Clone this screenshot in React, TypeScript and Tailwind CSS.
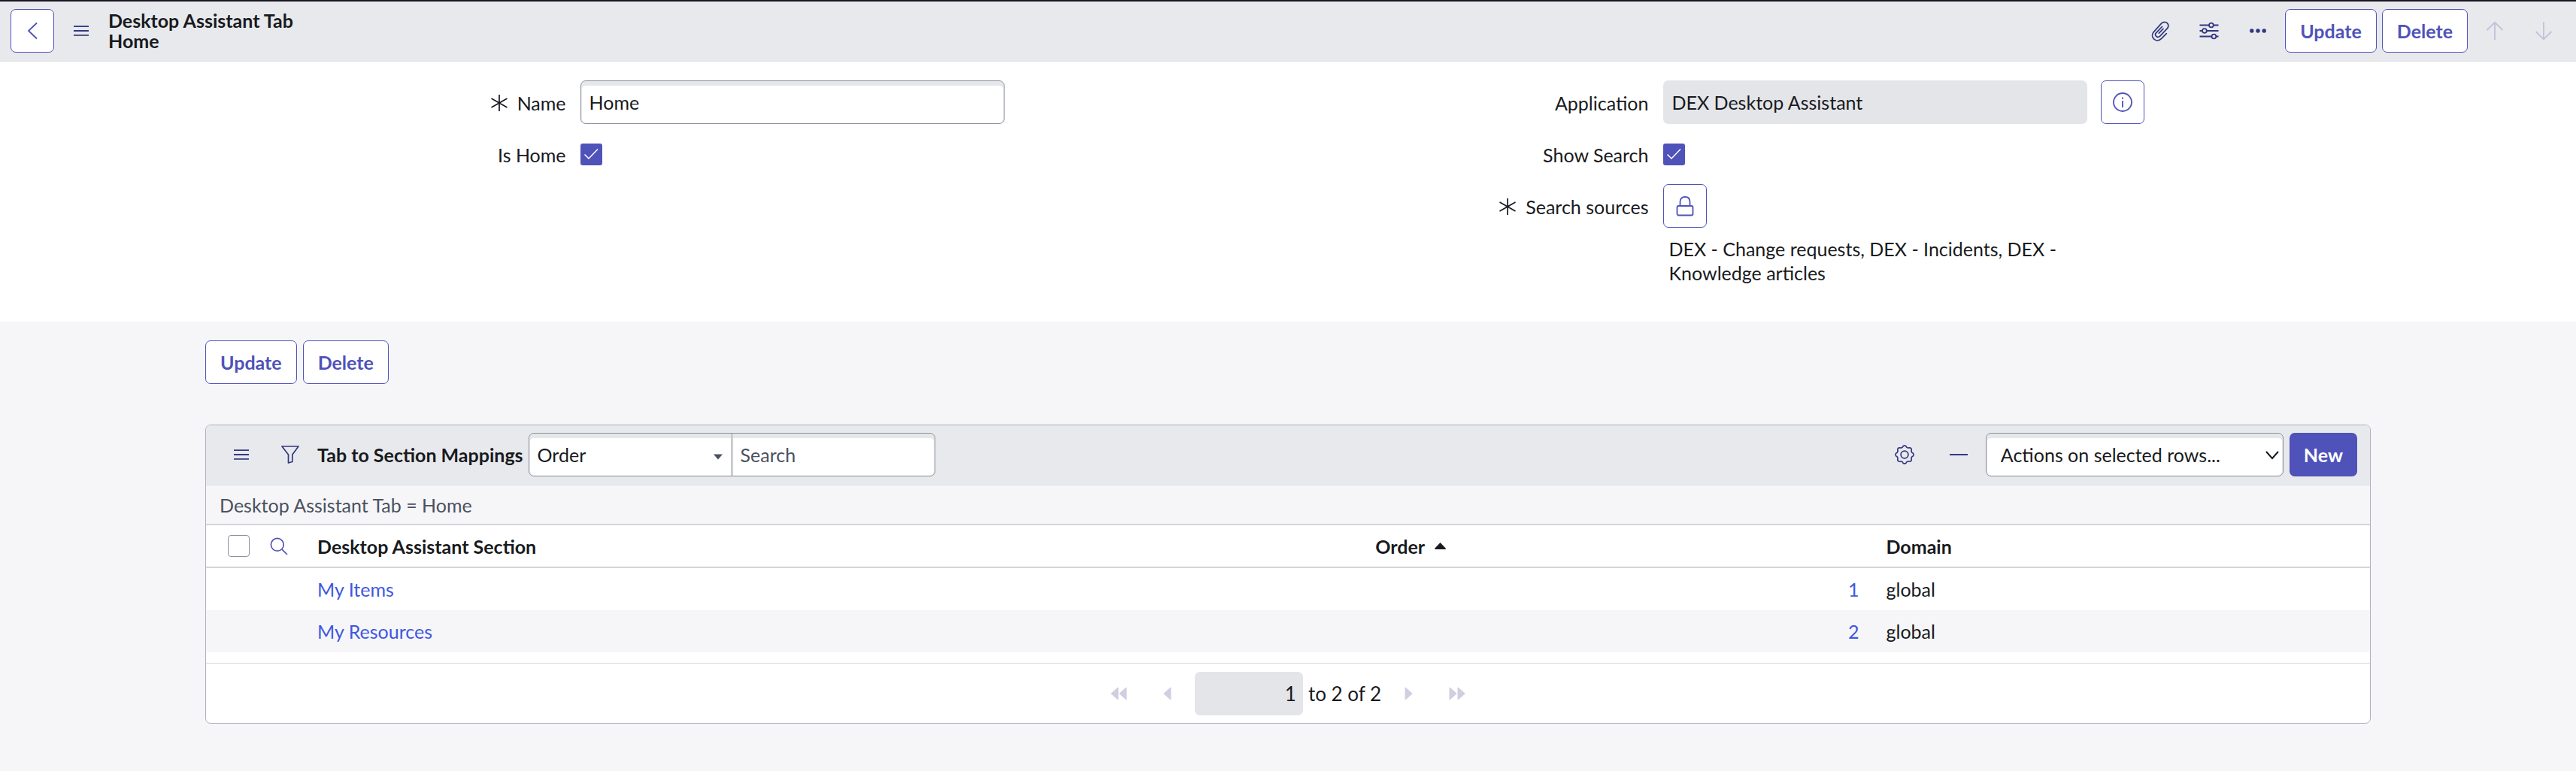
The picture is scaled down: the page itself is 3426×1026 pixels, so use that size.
import React from "react";

const ICON_BTN =
  "flex size-[58px] shrink-0 items-center justify-center rounded-[7px]";
const OUTLINE =
  "border border-[#4f52b9] bg-white text-[#4f52b9] rounded-[7px]";
const FIELD =
  "h-[58px] border border-[#8b90a0] bg-white text-[25px] text-[#181a20] shadow-[inset_0_6px_1px_#e6e7e8,inset_1px_0_1px_#e6e7e8,inset_-1px_0_1px_#e6e7e8] outline-none";

function TextButton({ children }: { children: string }) {
  return (
    <button type="button" className={`${OUTLINE} h-[58px] px-[19px] text-[25px] font-bold`}>
      {children}
    </button>
  );
}

function MenuIcon() {
  return (
    <svg width="20" height="14" viewBox="0 0 20 14" fill="none" stroke="currentColor" strokeWidth="1.8">
      <path d="M0 1.2h20M0 7h20M0 12.8h20" />
    </svg>
  );
}

function PaperclipIcon() {
  return (
    <svg width="24" height="27" viewBox="0 0 24 27" fill="none" stroke="currentColor" strokeWidth="1.7" strokeLinecap="round" strokeLinejoin="round">
      <path d="M20.3 16.7L13.6 23.4C10.4 26.4 6.4 26.6 3.6 23.9C.8 21.200.8 17.300 3.500 14.400L13.200 3.600C15.600.9 18.900.5 21.200 2.700C23.400 4.900 23.100 8 20.900 10.400L11.900 19.900C10.400 21.400 8.200 21.700 6.700 20.400C5.200 19 5.300 17.100 6.700 15.600L14.500 7.500" />
      <path d="M10.300 16.200L16 10.300" />
    </svg>
  );
}

function SlidersIcon() {
  return (
    <svg width="26" height="24" viewBox="0 0 26 24" fill="none" stroke="currentColor" strokeWidth="1.8">
      <path d="M0.500 4.500h12.500M18.800 4.500h6.700M0.500 12h3.500M9.800 12h15.700M0.500 19.500h16M22.300 19.500h3.200" />
      <circle cx="15.900" cy="4.500" r="2.900" />
      <circle cx="6.900" cy="12" r="2.900" />
      <circle cx="19.400" cy="19.500" r="2.900" />
    </svg>
  );
}

function DotsIcon() {
  return (
    <svg width="24" height="6" viewBox="0 0 24 6" fill="currentColor">
      <circle cx="3.8" cy="3" r="2.7" />
      <circle cx="12" cy="3" r="2.7" />
      <circle cx="20.2" cy="3" r="2.7" />
    </svg>
  );
}

function ArrowIcon({ down = false }: { down?: boolean }) {
  return (
    <svg width="24" height="26" viewBox="0 0 24 26" fill="none" stroke="currentColor" strokeWidth="1.8">
      {down ? <path d="M12 1v23M1.5 14L12 24.2L22.5 14" /> : <path d="M12 25V2M1.5 12L12 1.8L22.5 12" />}
    </svg>
  );
}

function AsteriskIcon() {
  return (
    <svg width="24" height="24" viewBox="0 0 24 24" fill="none" stroke="#181a20" strokeWidth="1.7" className="mr-[12px]">
      <path d="M12 1v22M1.5 6l21 12M22.5 6l-21 12" />
    </svg>
  );
}

function InfoIcon() {
  return (
    <svg width="26" height="26" viewBox="0 0 26 26" fill="none" stroke="currentColor" strokeWidth="1.8">
      <circle cx="13" cy="13" r="12" />
      <path d="M13 11v9M13 6.6v2.2" />
    </svg>
  );
}

function LockIcon() {
  return (
    <svg width="24" height="28" viewBox="0 0 24 28" fill="none" stroke="currentColor" strokeWidth="1.8">
      <rect x="1.5" y="14" width="21" height="12.5" rx="2" />
      <path d="M5.500 14V8.500C5.500 4.500 8 2 12 2s6.500 2.500 6.500 6.500V14" />
    </svg>
  );
}

function FunnelIcon() {
  return (
    <svg width="24" height="24" viewBox="0 0 24 24" fill="none" stroke="currentColor" strokeWidth="1.7" strokeLinejoin="round">
      <path d="M1 1h22L14.800 12v9.500L9.500 23V12z" />
    </svg>
  );
}

// Outline of a gear with eight soft teeth, the first one pointing up.
const gearPath =
  Array.from({ length: 128 }, (_, i) => {
    const a = (i / 128) * Math.PI * 2;
    const r = 11 + Math.tanh(1.6 * Math.cos(8 * a));
    const x = 14 + r * Math.sin(a);
    const y = 14 - r * Math.cos(a);
    return `${i === 0 ? "M" : "L"}${x.toFixed(2)} ${y.toFixed(2)}`;
  }).join("") + "z";

function GearIcon() {
  return (
    <svg width="28" height="28" viewBox="0 0 28 28" fill="none" stroke="currentColor" strokeWidth="1.700" strokeLinejoin="round">
      <path d={gearPath} />
      <circle cx="14" cy="14" r="4.900" />
    </svg>
  );
}

function SearchIcon() {
  return (
    <svg width="24" height="24" viewBox="0 0 24 24" fill="none" stroke="currentColor" strokeWidth="1.700">
      <circle cx="9.800" cy="9.800" r="8.400" />
      <path d="M15.800 15.800L23 23" />
    </svg>
  );
}

function PagerIcon({ double = false, right = false }: { double?: boolean; right?: boolean }) {
  return (
    <svg
      width={double ? 22 : 12}
      height="18"
      viewBox={double ? "0 0 22 18" : "0 0 12 18"}
      fill="currentColor"
      className={right ? "rotate-180" : ""}
    >
      <path d="M10.500 1.200V16.800Q10.200 17.800 9.200 17L1 9.800Q.3 9 1 8.200L9.200 1Q10.200.2 10.500 1.200z" />
      {double && <path d="M21.500 1.200V16.800Q21.200 17.800 20.200 17L12 9.800Q11.300 9 12 8.200L20.200 1Q21.200.2 21.500 1.200z" />}
    </svg>
  );
}

function CheckedBox({ id }: { id: string }) {
  return (
    <span className="relative flex size-[29px]">
      <input id={id} type="checkbox" defaultChecked className="size-full appearance-none rounded-[3px] bg-[#4f52b9]" />
      <svg viewBox="0 0 29 29" fill="none" stroke="#fff" strokeWidth="1.500" className="pointer-events-none absolute inset-0">
        <path d="M5.500 14.500L11 20L23 7.500" />
      </svg>
    </span>
  );
}

function Row({ id, label, required, children }: { id: string; label: string; required?: boolean; children: React.ReactNode }) {
  return (
    <div className="flex">
      <label htmlFor={id} className="flex h-[58px] w-[33.300%] shrink-0 items-center justify-end pt-[2px]">
        {required && <AsteriskIcon />}
        {label}
      </label>
      <div className="ml-[19px] flex min-h-[58px] min-w-0 flex-1 items-center">{children}</div>
    </div>
  );
}

const rows = [
  { section: "My Items", order: 1, domain: "global" },
  { section: "My Resources", order: 2, domain: "global" },
];

export default function App() {
  return (
    <div className="min-h-screen bg-[#f6f6f8] font-['Lato',sans-serif] text-[25px] leading-[32px] text-[#181a20]">
      <header className="flex items-center border-t-2 border-b border-t-[#181523] border-b-[#dddfe4] bg-[#e8e9ed] px-[14px] pt-[10px] pb-[11px]">
        <button type="button" aria-label="Back" className={`${ICON_BTN} ${OUTLINE}`}>
          <svg width="14" height="24" viewBox="0 0 14 24" fill="none" stroke="currentColor" strokeWidth="1.800">
            <path d="M13 1.500L2 12l11 10.500" />
          </svg>
        </button>
        <button type="button" aria-label="Form menu" className={`${ICON_BTN} ml-[7px] text-[#33377f]`}>
          <MenuIcon />
        </button>
        <h1 className="ml-[7px] text-[25px] leading-[27px] font-bold">
          Desktop Assistant Tab
          <br />
          Home
        </h1>
        <div className="ml-auto flex gap-[7px] text-[#33377f]">
          <button type="button" aria-label="Attachments" className={ICON_BTN}><PaperclipIcon /></button>
          <button type="button" aria-label="Personalize form" className={ICON_BTN}><SlidersIcon /></button>
          <button type="button" aria-label="More options" className={ICON_BTN}><DotsIcon /></button>
          <TextButton>Update</TextButton>
          <TextButton>Delete</TextButton>
          <button type="button" aria-label="Previous record" className={`${ICON_BTN} text-[#c1c1d8]`}><ArrowIcon /></button>
          <button type="button" aria-label="Next record" className={`${ICON_BTN} text-[#c1c1d8]`}><ArrowIcon down /></button>
        </div>
      </header>

      <form className="grid grid-cols-2 bg-white px-[7.970%] pt-[25px] pb-[49px]">
        <div className="flex flex-col gap-[11px]">
          <Row id="name" label="Name" required>
            <input id="name" defaultValue="Home" className={`${FIELD} w-[60%] rounded-[7px] px-[11px]`} />
          </Row>
          <Row id="is-home" label="Is Home">
            <CheckedBox id="is-home" />
          </Row>
        </div>
        <div className="flex flex-col gap-[11px]">
          <Row id="application" label="Application">
            <input id="application" readOnly defaultValue="DEX Desktop Assistant" className="h-[58px] w-[60%] rounded-[7px] bg-[#e4e5e9] px-[12px] outline-none" />
            <button type="button" aria-label="Application details" className={`${ICON_BTN} ${OUTLINE} ml-[18px]`}><InfoIcon /></button>
          </Row>
          <Row id="show-search" label="Show Search">
            <CheckedBox id="show-search" />
          </Row>
          <Row id="sources" label="Search sources" required>
            <div className="w-[60%]">
              <button id="sources" type="button" className={`${ICON_BTN} ${OUTLINE}`}><LockIcon /></button>
              <p className="mt-[12px] px-[8px]">DEX - Change requests, DEX - Incidents, DEX - Knowledge articles</p>
            </div>
          </Row>
        </div>
      </form>

      <main className="px-[7.970%] pt-[25px] pb-[62px]">
        <div className="flex gap-[8px]">
          <TextButton>Update</TextButton>
          <TextButton>Delete</TextButton>
        </div>

        <section className="mt-[54px] overflow-hidden rounded-[7px] border border-[#adb1bc] bg-white">
          <div className="flex items-center border-b border-[#dddfe4] bg-[#e8e9ed] pt-[10px] pr-[17px] pb-[11px] pl-[18px]">
            <button type="button" aria-label="List menu" className={`${ICON_BTN} text-[#33377f]`}><MenuIcon /></button>
            <button type="button" aria-label="Filter" className={`${ICON_BTN} ml-[7px] text-[#33377f]`}><FunnelIcon /></button>
            <h2 className="ml-[7px] text-[25px] font-bold">Tab to Section Mappings</h2>
            <div className="ml-[7px] flex">
              <div className="relative">
                <select aria-label="Search field" className={`${FIELD} w-[271px] appearance-none rounded-l-[7px] pr-[36px] pl-[11px]`}>
                  <option>Order</option>
                </select>
                <svg width="12" height="8" viewBox="0 0 12 8" fill="#4a5160" className="pointer-events-none absolute top-[28px] right-[13px]">
                  <path d="M0 .5h12L6 7.500z" />
                </svg>
              </div>
              <input aria-label="Search" placeholder="Search" className={`${FIELD} -ml-px w-[271px] rounded-r-[7px] px-[11px] placeholder:text-[#4a5160]`} />
            </div>
            <button type="button" aria-label="List settings" className={`${ICON_BTN} ml-auto text-[#33377f]`}><GearIcon /></button>
            <button type="button" aria-label="Collapse" className={`${ICON_BTN} ml-[14px] text-[#33377f]`}>
              <svg width="24" height="2" viewBox="0 0 24 2" fill="currentColor"><path d="M0 0h24v2H0z" /></svg>
            </button>
            <div className="relative ml-[7px]">
              <select aria-label="Actions on selected rows" className={`${FIELD} w-[396px] appearance-none rounded-[7px] pr-[36px] pl-[19px]`}>
                <option>Actions on selected rows...</option>
              </select>
              <svg width="18" height="12" viewBox="0 0 18 12" fill="none" stroke="#181a20" strokeWidth="2" className="pointer-events-none absolute top-[24px] right-[6px]">
                <path d="M1 1l8 9l8-9" />
              </svg>
            </div>
            <button type="button" className="ml-[8px] h-[58px] rounded-[7px] bg-[#4f52b9] px-[19px] text-[25px] font-bold text-white">New</button>
          </div>

          <div className="flex h-[53px] items-center border-b-2 border-[#d3d5db] bg-[#f6f6f8] px-[18px] text-[#4a5160]">
            <a href="#filter">Desktop Assistant Tab = Home</a>
          </div>

          <table className="mb-[14px] w-full table-fixed border-separate border-spacing-0 text-left">
            <colgroup>
              <col className="w-[72px]" />
              <col className="w-[58px]" />
              <col className="w-[48.900%]" />
              <col className="w-[23.600%]" />
              <col />
            </colgroup>
            <thead>
              <tr className="h-[57px] *:border-b-2 *:border-[#d3d5db]">
                <th className="pl-[29px]">
                  <input type="checkbox" aria-label="Select all rows" className="block size-[29px] appearance-none rounded-[4px] border border-[#8b90a0] bg-white" />
                </th>
                <th>
                  <button type="button" aria-label="Show column search" className="flex w-full items-center pl-[13px] text-[#4f52b9]"><SearchIcon /></button>
                </th>
                <th className="px-[18px]">Desktop Assistant Section</th>
                <th className="px-[18px]">
                  <span className="flex items-center gap-[13px]">
                    Order
                    <svg width="15" height="9" viewBox="0 0 15 9" fill="currentColor"><path d="M7.500 0L15 8q0 1-1 1H1Q0 9 0 8z" /></svg>
                  </span>
                </th>
                <th className="px-[18px]">Domain</th>
              </tr>
            </thead>
            <tbody>
              {rows.map((r) => (
                <tr key={r.section} className="h-[56px] even:bg-[#f6f6f8]">
                  <td />
                  <td />
                  <td className="px-[18px]"><a href="#record" className="text-[#3f57e0]">{r.section}</a></td>
                  <td className="px-[18px] text-right"><a href="#record" className="text-[#3f57e0]">{r.order}</a></td>
                  <td className="px-[18px]">{r.domain}</td>
                </tr>
              ))}
            </tbody>
          </table>

          <nav aria-label="Pagination" className="flex items-center justify-center gap-[7px] border-t border-[#d3d5db] pt-[11px] pb-[10px] text-[26px] text-[#cfcfe1]">
            <button type="button" aria-label="First page" className={ICON_BTN}><PagerIcon double /></button>
            <button type="button" aria-label="Previous page" className={ICON_BTN}><PagerIcon /></button>
            <input aria-label="Skip to row" readOnly defaultValue="1" className="h-[58px] w-[144px] rounded-[7px] bg-[#e4e5e9] px-[9px] text-right text-[#181a20] outline-none" />
            <span className="text-[#181a20]">to 2 of 2</span>
            <button type="button" aria-label="Next page" className={ICON_BTN}><PagerIcon right /></button>
            <button type="button" aria-label="Last page" className={ICON_BTN}><PagerIcon double right /></button>
          </nav>
        </section>
      </main>
    </div>
  );
}
